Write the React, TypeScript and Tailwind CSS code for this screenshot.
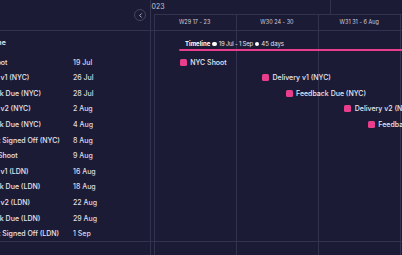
import React from "react";

const DW = 82.3 / 7;
const PINK = "#e83e8c";

const tasks = [
  { name: "NYC Shoot", date: "19 Jul", d: 2, h: "h-[16px]" },
  { name: "Delivery v1 (NYC)", date: "26 Jul", d: 9, h: "h-[15px]" },
  { name: "Feedback Due (NYC)", date: "28 Jul", d: 11, h: "h-[16px]" },
  { name: "Delivery v2 (NYC)", date: "2 Aug", d: 16, h: "h-[15px]" },
  { name: "Feedback Due (NYC)", date: "4 Aug", d: 18, h: "h-[16px]" },
  { name: "Final Cut Signed Off (NYC)", date: "8 Aug", d: 22, h: "h-[16px]" },
  { name: "London Shoot", date: "9 Aug", d: 23, h: "h-[15px]" },
  { name: "Delivery v1 (LDN)", date: "16 Aug", d: 30, h: "h-[16px]" },
  { name: "Feedback Due (LDN)", date: "18 Aug", d: 32, h: "h-[15px]" },
  { name: "Delivery v2 (LDN)", date: "22 Aug", d: 36, h: "h-[16px]" },
  { name: "Feedback Due (LDN)", date: "29 Aug", d: 43, h: "h-[16px]" },
  { name: "Final Cut Signed Off (LDN)", date: "1 Sep", d: 46, h: "h-[15px]" },
];

const weeks = ["W29 17 - 23", "W30 24 - 30", "W31 31 - 6 Aug", "W32 7 - 13"];

function ChevronLeft() {
  return (
    <svg width="7" height="7" viewBox="0 0 24 24" fill="none" stroke="#d6d6e0" strokeWidth="2.6" strokeLinecap="round" strokeLinejoin="round">
      <path d="M15 18l-6-6 6-6" />
    </svg>
  );
}

export default function App() {
  return (
    <div className="w-[402px] h-[255px] bg-[#1c1b36] flex overflow-hidden font-['Inter',sans-serif] text-[7px] leading-none text-[#e6e6ef]">
      {/* Left panel */}
      <div className="w-[151px] shrink-0 border-r border-[#34334f] flex flex-col overflow-hidden relative z-10 bg-[#1c1b36]">
        <div className="h-[31px] shrink-0 border-b border-[#34334f] flex items-center justify-end pr-[4px]">
          <div className="w-[12px] h-[12px] rounded-full border border-[#46455f] flex items-center justify-center">
            <ChevronLeft />
          </div>
        </div>
        <div className="h-[23px] shrink-0 flex items-center -ml-[29px]">
          <div className="w-[102px] pl-[15px] font-semibold text-[#ececf4] whitespace-nowrap">Name</div>
        </div>
        <div className="border-b border-[#34334f] -ml-[29px] w-[180px]">
          {tasks.map((t, i) => (
            <div key={i} className={`${t.h} flex items-center whitespace-nowrap font-medium`}>
              <div className="w-[102px] shrink-0">{t.name}</div>
              <div className="text-[#dcdce4]">{t.date}</div>
            </div>
          ))}
        </div>
      </div>

      {/* Chart */}
      <div className="flex-1 relative overflow-hidden">
        {/* week grid lines */}
        <div className="absolute top-[15px] bottom-0 left-[2.5px] flex">
          {weeks.map((w) => (
            <div key={w} className="w-[82.3px] shrink-0 border-l border-[#34334f]" />
          ))}
        </div>

        <div className="relative">
          {/* month row */}
          <div className="h-[15px] flex">
            <div className="w-[2.5px] shrink-0" />
            <div className="w-[176.4px] shrink-0 border-b border-[#34334f] relative">
              <span className="absolute left-[-2px] top-[3px] text-[7px] text-[#c6c6d2] whitespace-nowrap">023</span>
            </div>
            <div className="w-[200px] shrink-0 border-l border-b border-[#34334f]" />
          </div>
          {/* week row */}
          <div className="h-[16px] flex border-b border-[#34334f] pl-[2.5px]">
            {weeks.map((w) => (
              <div key={w} className="w-[82.3px] shrink-0 flex items-center justify-center text-[5.5px] text-[#cfcfdb] whitespace-nowrap">
                {w}
              </div>
            ))}
          </div>
          {/* timeline row */}
          <div className="h-[23px] flex flex-col justify-end pb-[3px] pl-[2.5px]">
            <div className="flex items-center gap-[2px] text-[6px] whitespace-nowrap text-[#e2e2ec] mb-[2px]" style={{ marginLeft: 2 * DW + 8 }}>
              <span className="font-bold text-white">Timeline</span>
              <span className="w-[4.5px] h-[4.5px] rounded-full bg-white" />
              <span className="tracking-[-0.25px]">19 Jul - 1 Sep</span>
              <span className="w-[4.5px] h-[4.5px] rounded-full bg-white" />
              <span>45 days</span>
            </div>
            <div className="h-[2px] rounded-l-full" style={{ marginLeft: 2 * DW + 2, width: 44 * DW, backgroundColor: PINK }} />
          </div>
          {/* task rows */}
          <div className="border-b border-[#34334f] pl-[2.5px]">
            {tasks.map((t, i) => (
              <div key={i} className={`${t.h} flex items-center whitespace-nowrap`}>
                <div className="shrink-0" style={{ width: t.d * DW + 2.7 }} />
                <div className="w-[7px] h-[7px] rounded-[1.5px] shrink-0" style={{ backgroundColor: PINK }} />
                <div className="ml-[3.5px] font-medium text-[#e8e8f0]">{t.name}</div>
              </div>
            ))}
          </div>
        </div>
      </div>
    </div>
  );
}
